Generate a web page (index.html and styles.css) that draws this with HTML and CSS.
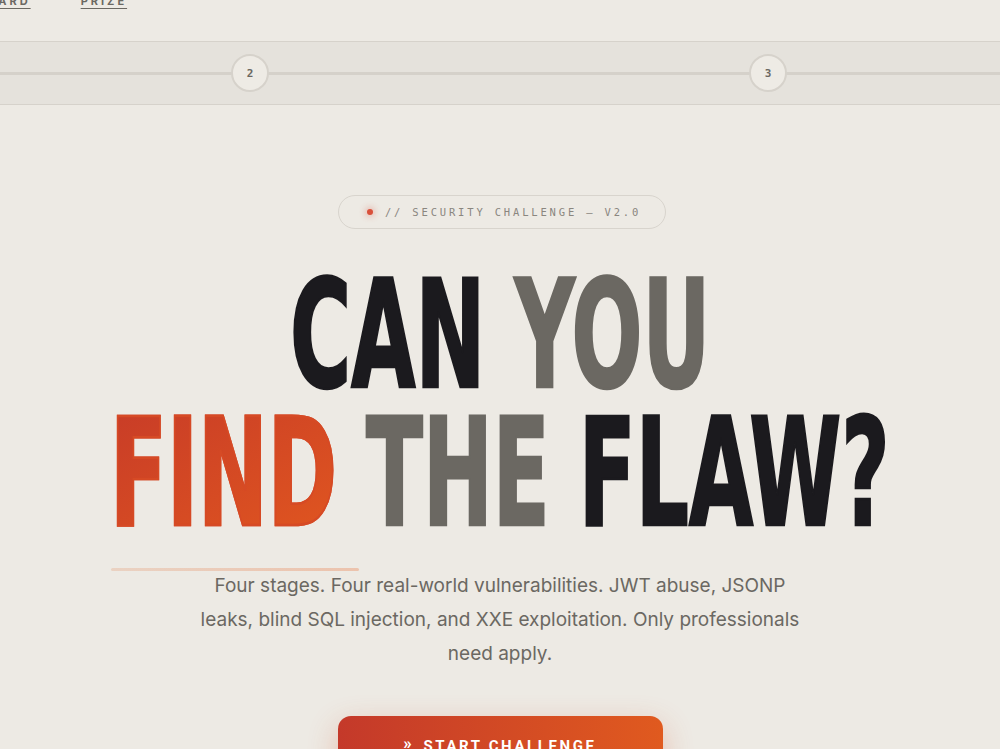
FILE: index.html
```html
<!DOCTYPE html>
<html lang="en">
<head>
<meta charset="utf-8">
<title>Can you find the flaw?</title>
<link rel="stylesheet" href="styles.css">
</head>
<body>
<nav class="topnav">
  <a class="navlink first" href="#">LEADERBOARD</a>
  <a class="navlink" href="#">PRIZE</a>
</nav>
<div class="stepper">
  <div class="steps">
    <span class="step">1</span>
    <span class="step">2</span>
    <span class="step">3</span>
    <span class="step">4</span>
  </div>
</div>
<main class="hero">
  <div class="pill"><span class="dot"></span>// SECURITY CHALLENGE — V2.0</div>
  <h1 class="headline">
    <span class="line"><span class="dark">CAN</span> <span class="gray">YOU</span></span>
    <span class="line"><span class="accent">FIND</span> <span class="gray">THE</span> <span class="dark">FLAW?</span></span>
  </h1>
  <div class="rule-wrap"><div class="rule"></div></div>
  <p class="lead">Four stages. Four real-world vulnerabilities. JWT abuse, JSONP leaks, blind SQL injection, and XXE exploitation. Only professionals need apply.</p>
  <a class="cta" href="#"><span class="chev">»</span>START CHALLENGE</a>
</main>
</body>
</html>
```

FILE: styles.css
```css
* { box-sizing: border-box; }
html, body { margin: 0; padding: 0; }
body {
  background: #edeae4;
  color: #1b1a1e;
  font-family: "Inter", "Liberation Sans", sans-serif;
  overflow: hidden;
  height: 749px;
}
.topnav {
  display: flex;
  gap: 50px;
  height: 47px;
  margin-top: -6px;
}
.navlink {
  font-family: "Inter", "Liberation Sans", sans-serif;
  font-weight: 700;
  font-size: 11px;
  line-height: 14px;
  letter-spacing: 3px;
  color: #6b6862;
  text-decoration: underline;
  text-underline-offset: 3px;
  text-decoration-thickness: 1px;
}
.navlink.first { margin-left: -84px; }

.stepper {
  height: 64px;
  border-top: 1px solid #d6d2cb;
  border-bottom: 1px solid #d6d2cb;
  background:
    linear-gradient(#d5d1ca, #d5d1ca) 0 30px / 100% 3px no-repeat,
    #e5e2dc;
  display: flex;
  justify-content: center;
  align-items: center;
  overflow: hidden;
}
.steps {
  display: flex;
  gap: 480px;
  flex: none;
  margin-left: 18px;
}
.step {
  width: 38px;
  height: 38px;
  border-radius: 50%;
  background: #eeebe5;
  border: 2px solid #d6d2cb;
  display: flex;
  align-items: center;
  justify-content: center;
  font-family: "DejaVu Sans Mono", monospace;
  font-weight: 700;
  font-size: 11px;
  color: #6b6862;
}

.hero {
  display: flex;
  flex-direction: column;
  align-items: center;
  padding-top: 90px;
}
.pill {
  display: flex;
  align-items: center;
  height: 34px;
  padding: 0 24px 0 28px;
  margin-left: 4px;
  border: 1px solid #d8d4cd;
  border-radius: 999px;
  font-family: "DejaVu Sans Mono", monospace;
  font-size: 10.5px;
  letter-spacing: 2.83px;
  color: #8a867f;
}
.dot {
  width: 6px;
  height: 6px;
  border-radius: 50%;
  background: #d9503a;
  box-shadow: 0 0 6px 2px rgba(217, 80, 58, 0.3);
  margin-right: 12px;
}
.headline {
  margin: 37px 0 0;
  font-family: "DejaVu Sans Condensed", "DejaVu Sans", sans-serif;
  font-weight: 700;
  font-size: 150px;
  line-height: 138px;
  letter-spacing: 0;
  text-align: center;
  display: flex;
  flex-direction: column;
  align-items: center;
}
.line {
  display: block;
  white-space: nowrap;
  transform: scaleX(0.618);
}
.dark { color: #1b1a1e; -webkit-text-stroke: 2.5px #1b1a1e; }
.gray { color: #6b6862; -webkit-text-stroke: 2.5px #6b6862; }
.accent {
  background: linear-gradient(160deg, #c63a28 0%, #e2581f 100%);
  -webkit-background-clip: text;
  background-clip: text;
  color: transparent;
  -webkit-text-stroke: 2.5px #d64a25;
}
.rule-wrap {
  width: 778px;
  margin-top: 26px;
}
.rule {
  width: 248px;
  height: 3px;
  background: linear-gradient(90deg, #ead2c2, #ecc3ad);
  border-radius: 2px;
}
.lead {
  margin: -2px 0 0;
  max-width: 600px;
  text-align: center;
  font-size: 19px;
  line-height: 34px;
  color: #6b6862;
}
.cta {
  margin-top: 45px;
  width: 325px;
  height: 58px;
  border-radius: 13px;
  background: linear-gradient(90deg, #c4392a, #e05a1f);
  box-shadow: 0 10px 30px rgba(214, 80, 40, 0.3);
  color: #fff;
  text-decoration: none;
  display: flex;
  align-items: center;
  justify-content: center;
  font-family: "Roboto", "Inter", sans-serif;
  font-weight: 700;
  font-size: 15px;
  letter-spacing: 2.6px;
  padding-top: 2px;
}
.chev {
  font-size: 17px;
  margin-right: 9px;
  position: relative;
  top: -3px;
}
```
